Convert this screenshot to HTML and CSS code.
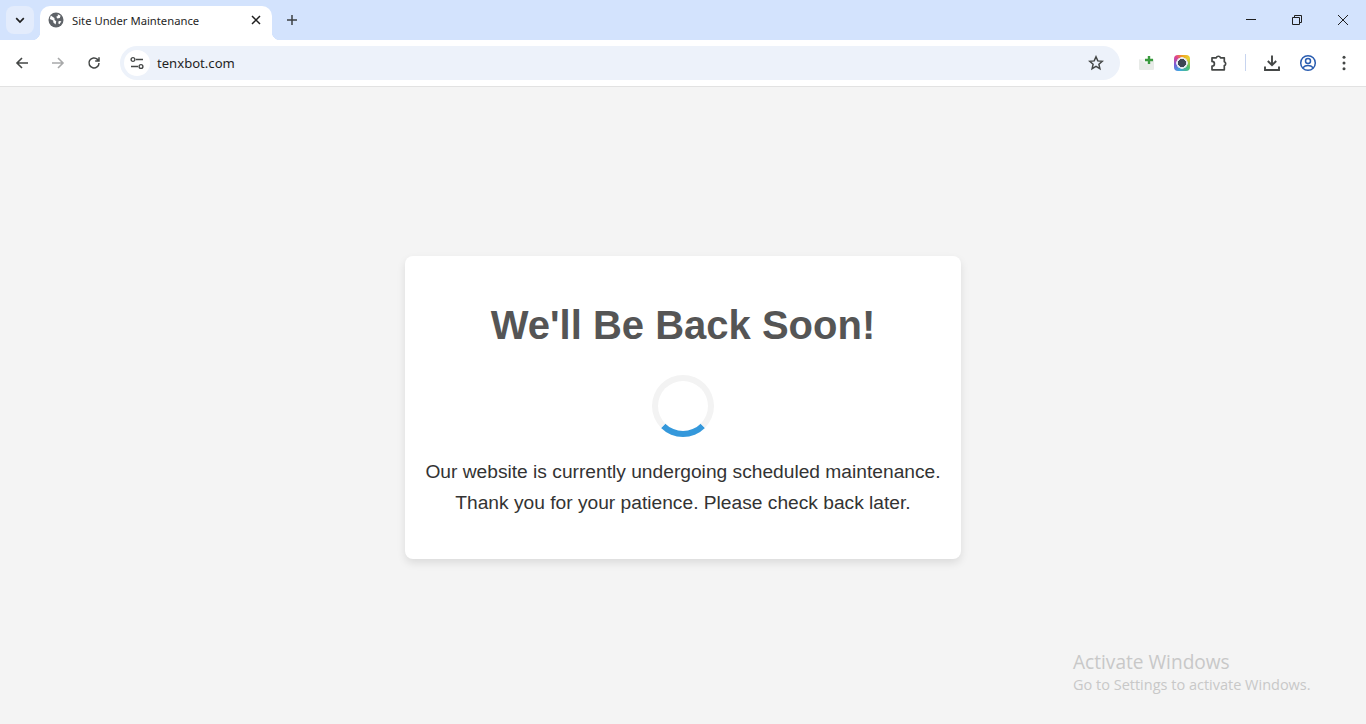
FILE: index.html
```html
<!DOCTYPE html>
<html lang="en">
<head>
<meta charset="utf-8">
<title>Site Under Maintenance</title>
<link rel="stylesheet" href="styles.css">
</head>
<body>
<div class="browser">
  <header class="tabstrip">
    <button class="tab-search" aria-label="Search tabs">
      <svg width="12" height="12" viewBox="0 0 12 12"><path d="M2.200 4.200 6 8l3.800-3.800" fill="none" stroke="#1f1f1f" stroke-width="1.700"/></svg>
    </button>
    <div class="tab">
      <svg class="favicon" width="16" height="16" viewBox="0 0 16 16"><circle cx="8" cy="8" r="7.500" fill="#5f6368"/><path d="M2.800 3.400 6.400 6l.2 2 1.600 1.200-.6 3.400-2.200-2-.2-2L1.800 7zM9.800 2.200l2.800 1.600-.8 2.200-2.400.4-1.200-1.600 1.600-.8zM10.800 9l2.600.2-2 3-1.200-1z" fill="#fff"/></svg>
      <span class="tab-title">Site Under Maintenance</span>
      <svg class="tab-close" width="10" height="10" viewBox="0 0 10 10"><path d="M1 1l8 8M9 1l-8 8" stroke="#1f1f1f" stroke-width="1.500" fill="none"/></svg>
    </div>
    <svg class="new-tab" width="12" height="12" viewBox="0 0 12 12"><path d="M6 1v10M1 6h10" stroke="#3c4043" stroke-width="1.500" fill="none"/></svg>
    <div class="window-controls">
      <svg width="12" height="12" viewBox="0 0 12 12"><path d="M1 5.500h10" stroke="#1f1f1f" fill="none"/></svg>
      <svg width="12" height="12" viewBox="0 0 12 12"><path d="M1.500 3.500h7v7h-7zM3.500 3.500v-2h7v7h-2" stroke="#1f1f1f" fill="none"/></svg>
      <svg width="12" height="12" viewBox="0 0 12 12"><path d="M1 1l10 10M11 1 1 11" stroke="#1f1f1f" fill="none"/></svg>
    </div>
  </header>
  <nav class="toolbar">
    <div class="nav-buttons">
      <svg width="14" height="14" viewBox="0 0 14 14"><path d="M13 7H2M7 2 2 7l5 5" stroke="#444746" stroke-width="1.600" fill="none"/></svg>
      <svg width="14" height="14" viewBox="0 0 14 14"><path d="M1 7h11M7 2l5 5-5 5" stroke="#a8a9aa" stroke-width="1.600" fill="none"/></svg>
      <svg width="14" height="14" viewBox="0 0 14 14"><path d="M12 7a5 5 0 1 1-1.500-3.600L12 5M12 1.200V5H8.200" stroke="#444746" stroke-width="1.500" fill="none"/></svg>
    </div>
    <div class="omnibox">
      <span class="site-info">
        <svg width="14" height="14" viewBox="0 0 14 14"><path d="M6 3.500h7M1 10.500h7" stroke="#444746" stroke-width="1.500" fill="none"/><circle cx="3" cy="3.500" r="1.900" fill="none" stroke="#444746" stroke-width="1.400"/><circle cx="11" cy="10.500" r="1.900" fill="none" stroke="#444746" stroke-width="1.400"/></svg>
      </span>
      <span class="url">tenxbot.com</span>
      <svg class="star" width="16" height="16" viewBox="0 0 16 16"><path d="m8 1.800 1.800 4.100 4.500.4-3.400 3 1 4.400L8 11.400l-3.900 2.300 1-4.400-3.400-3 4.500-.4z" fill="none" stroke="#444746" stroke-width="1.500"/></svg>
    </div>
    <div class="extensions">
      <span class="ext-btn">
        <svg width="18" height="18" viewBox="0 0 18 18"><rect x="1" y="5" width="15" height="11" rx="1" fill="#e8ebe8"/><path d="M1 5h15l-7 5z" fill="#f4f6f4"/><path d="M11 2v8M7 6h8" stroke="#3a9a3e" stroke-width="2.400" fill="none"/></svg>
      </span>
      <span class="ext-btn"><span class="camera-icon"></span></span>
      <span class="ext-btn">
        <svg width="18" height="18" viewBox="0 0 18 18"><path d="M2 3.800h4.300a2.200 2.200 0 0 1 4.200 0h3.800v4a2 2 0 0 1 0 3.800v4.200H2v-3.600a2.300 2.300 0 0 0 0-4.800z" fill="none" stroke="#444746" stroke-width="1.700" stroke-linejoin="round"/></svg>
      </span>
      <span class="divider"></span>
      <span class="ext-btn">
        <svg width="18" height="18" viewBox="0 0 18 18"><path d="M9 1.500v9.500M4.800 7 9 11.200 13.200 7" stroke="#444746" stroke-width="1.900" fill="none"/><path d="M2 12.500v3.500h14v-3.500" stroke="#444746" stroke-width="1.900" fill="none"/></svg>
      </span>
      <span class="ext-btn">
        <svg width="18" height="18" viewBox="0 0 18 18"><circle cx="9" cy="9" r="7.300" fill="none" stroke="#2a5db0" stroke-width="1.500"/><circle cx="9" cy="7" r="2.500" fill="none" stroke="#2a5db0" stroke-width="1.500"/><path d="M3.800 13.700c2.800-2.800 7.600-2.800 10.400 0" fill="none" stroke="#2a5db0" stroke-width="1.500"/></svg>
      </span>
      <span class="ext-btn">
        <svg width="4" height="16" viewBox="0 0 4 16"><circle cx="2" cy="2.300" r="1.500" fill="#444746"/><circle cx="2" cy="8" r="1.500" fill="#444746"/><circle cx="2" cy="13.700" r="1.500" fill="#444746"/></svg>
      </span>
    </div>
  </nav>
  <main class="page">
    <section class="card">
      <h1 class="card-title">We'll Be Back Soon!</h1>
      <div class="spinner"></div>
      <p class="card-text">Our website is currently undergoing scheduled maintenance.<br>Thank you for your patience. Please check back later.</p>
    </section>
    <aside class="watermark">
      <div class="wm-title">Activate Windows</div>
      <div class="wm-sub">Go to Settings to activate Windows.</div>
    </aside>
  </main>
</div>
</body>
</html>
```

FILE: styles.css
```css
* { box-sizing: border-box; }
html, body { margin: 0; height: 100%; overflow: hidden; }
body { font-family: "Liberation Sans", Arial, sans-serif; }
.browser { display: flex; flex-direction: column; height: 724px; }

.tabstrip {
  height: 40px;
  flex: none;
  display: flex;
  align-items: flex-start;
  background: #d3e3fd;
  padding-left: 6px;
}
.tab-search {
  width: 28px;
  height: 28px;
  margin-top: 6px;
  padding: 0;
  border: 0;
  border-radius: 8px;
  background: #e3ecfc;
  display: flex;
  align-items: center;
  justify-content: center;
}
.tab {
  position: relative;
  width: 232px;
  height: 34px;
  margin-top: 6px;
  margin-left: 6px;
  padding: 0 11px 6px 8px;
  background: #fff;
  border-radius: 10px 10px 0 0;
  display: flex;
  align-items: center;
}
.tab::before, .tab::after {
  content: "";
  position: absolute;
  bottom: 0;
  width: 8px;
  height: 8px;
}
.tab::before { left: -8px; background: radial-gradient(circle at 0 0, transparent 8px, #fff 8.5px); }
.tab::after { right: -8px; background: radial-gradient(circle at 100% 0, transparent 8px, #fff 8.5px); }
.favicon { flex: none; }
.tab-title {
  margin-left: 8px;
  flex: 1;
  font: 11.250px "Noto Sans", sans-serif;
  color: #1f1f1f;
  white-space: nowrap;
}
.tab-close { flex: none; }
.new-tab { margin: 14px 0 0 14px; }
.window-controls {
  margin-left: auto;
  display: flex;
  gap: 34px;
  padding: 14px 17px 0 0;
}

.toolbar {
  height: 47px;
  flex: none;
  display: flex;
  align-items: center;
  background: #fff;
  border-bottom: 1px solid #e2e2e2;
  padding-bottom: 1px;
}
.nav-buttons {
  display: flex;
  gap: 22px;
  padding-left: 15px;
  width: 120px;
}
.omnibox {
  width: 1000px;
  height: 34px;
  border-radius: 17px;
  background: #edf2fa;
  display: flex;
  align-items: center;
  padding: 0 16px 0 4px;
}
.site-info {
  width: 26px;
  height: 26px;
  border-radius: 50%;
  background: #fff;
  display: flex;
  align-items: center;
  justify-content: center;
}
.url {
  margin-left: 7px;
  flex: 1;
  font: 13.100px "Noto Sans", sans-serif;
  color: #1f1f1f;
}
.extensions {
  display: flex;
  align-items: center;
  padding-left: 9px;
}
.ext-btn {
  width: 36px;
  height: 36px;
  display: flex;
  align-items: center;
  justify-content: center;
}
.camera-icon {
  width: 16px;
  height: 16px;
  margin-right: 2px;
  border-radius: 4px;
  background:
    radial-gradient(circle, #3c4654 0 3.800px, #e6e8ef 4.300px 5.500px, transparent 6px),
    conic-gradient(#f0a020, #e8d030 15%, #4cc070 35%, #3fa8e0 55%, #7a5bd6 72%, #e0428e 88%, #f0a020);
}
.divider {
  width: 1px;
  height: 17px;
  margin: 0 8px;
  background: #c7d4ef;
}

.page {
  position: relative;
  flex: 1;
  background: #f4f4f4;
  display: flex;
  justify-content: center;
  align-items: flex-start;
  padding-top: 169px;
}
.card {
  width: 556px;
  height: 303px;
  padding: 40px 20px;
  background: #fff;
  border-radius: 8px;
  box-shadow: 0 4px 8px rgba(0, 0, 0, 0.1);
  text-align: center;
}
.card-title {
  margin: 0;
  font-size: 40px;
  line-height: 58px;
  font-weight: 700;
  color: #555;
}
.spinner {
  box-sizing: content-box;
  width: 50px;
  height: 50px;
  margin: 21px auto 20px;
  border: 6px solid #f3f3f3;
  border-bottom-color: #3498db;
  border-radius: 50%;
}
.card-text {
  margin: 0;
  font-size: 19.200px;
  line-height: 30.720px;
  color: #333;
  white-space: nowrap;
}
.watermark {
  position: absolute;
  left: 1073px;
  top: 562px;
  font-family: "Open Sans", sans-serif;
  color: #c8c8c8;
}
.wm-title { font-size: 19.100px; line-height: 27px; }
.wm-sub { font-size: 14.500px; line-height: 18px; }
```
